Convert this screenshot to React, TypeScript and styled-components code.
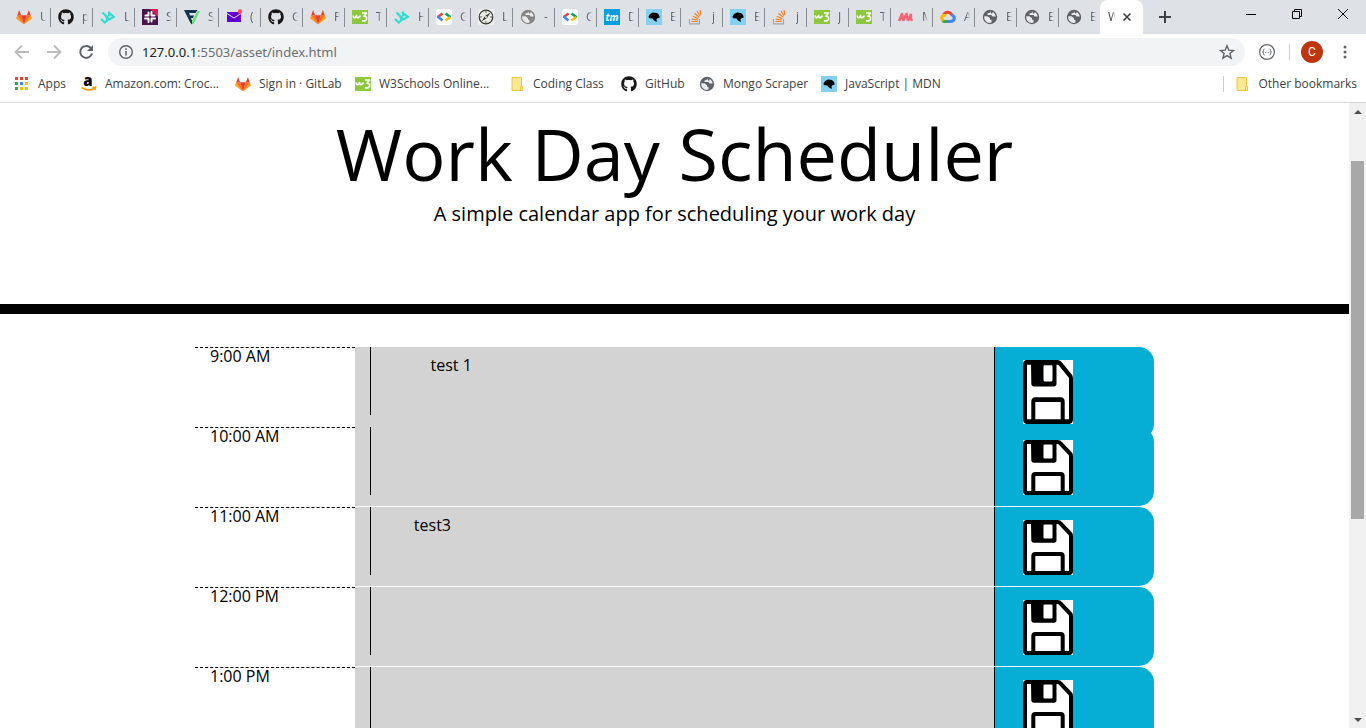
import React, { useState } from "react";
import styled, { createGlobalStyle } from "styled-components";
import { FaGithub } from "react-icons/fa";

const GlobalStyle = createGlobalStyle`
  * { box-sizing: border-box; }
  body {
    margin: 0;
    background: #fff;
    color: #000;
    font-family: "Open Sans", sans-serif;
    font-size: 16px;
    line-height: 24px;
  }
  button, textarea, input { font: inherit; color: inherit; }
`;

const Screen = styled.div`
  display: flex;
  flex-direction: column;
  height: 100vh;
  overflow: hidden;
`;

const PlainButton = styled.button`
  display: flex;
  align-items: center;
  justify-content: center;
  flex: none;
  padding: 0;
  border: 0;
  background: none;
`;

/* ---------- tab strip ---------- */

const TabStrip = styled.div`
  display: flex;
  height: 34px;
  padding-left: 8px;
  background: #dee1e6;
  font-size: 12px;
  line-height: 16px;
`;

const Tab = styled(PlainButton)`
  justify-content: flex-start;
  gap: 8px;
  width: 42px;
  padding-left: 8px;
  color: #5f6368;

  & + & {
    background: linear-gradient(#888c91, #888c91) left 0 top 8px / 1px 19px no-repeat;
  }
`;

const TabTitle = styled.span<{ $wide?: boolean }>`
  width: ${(p) => (p.$wide ? 8 : 6)}px;
  overflow: hidden;
  text-align: left;
  white-space: nowrap;
  mask-image: linear-gradient(to right, #000 40%, transparent);
`;

const ActiveTab = styled.div`
  display: flex;
  align-items: center;
  gap: 6px;
  width: 43px;
  padding-left: 8px;
  border-radius: 8px 8px 0 0;
  background: #fff;
  color: #3c4043;
`;

const NewTab = styled(PlainButton)`
  width: 44px;
`;

const WindowControls = styled.div`
  display: flex;
  margin-left: auto;
`;

const WindowButton = styled(PlainButton)`
  width: 46px;
  height: 28px;
`;

/* ---------- toolbar ---------- */

const Toolbar = styled.div`
  display: flex;
  align-items: center;
  height: 36px;
  padding: 0 9px 0 6px;
`;

const ToolButton = styled(PlainButton)`
  width: 32px;
  height: 28px;
`;

const AddressBar = styled.div`
  display: flex;
  flex: 1;
  align-items: center;
  height: 28px;
  margin-left: 6px;
  padding: 0 10px;
  border-radius: 14px;
  background: #f1f3f4;
  color: #6b6f73;
  font-family: "Noto Sans", sans-serif;
  font-size: 13px;
  line-height: 20px;
`;

const Address = styled.div`
  flex: 1;
  margin-left: 8px;
  b { color: #202124; font-weight: 400; }
`;

const Divider = styled.span`
  width: 1px;
  height: 16px;
  background: #cccfd2;
`;

const Avatar = styled(PlainButton)`
  width: 22px;
  height: 22px;
  margin: 0 10px 0 11px;
  border-radius: 50%;
  background: #bf360c;
  color: #fff;
  font-family: Roboto, sans-serif;
  font-size: 12px;
`;

/* ---------- bookmarks ---------- */

const BookmarkBar = styled.nav`
  display: flex;
  align-items: center;
  height: 33px;
  padding: 0 9px 4px 14px;
  border-bottom: 1px solid #d5d7da;
  color: #3c4043;
  font-size: 12px;
  line-height: 16px;
`;

const Bookmark = styled.a<{ $width?: number }>`
  display: flex;
  align-items: center;
  gap: 8px;
  width: ${(p) => (p.$width ? `${p.$width}px` : "auto")};
  color: inherit;
  text-decoration: none;
  white-space: nowrap;
`;

const OtherBookmarks = styled.div`
  display: flex;
  align-items: center;
  gap: 10px;
  margin-left: auto;
`;

/* ---------- page ---------- */

const Viewport = styled.div`
  display: flex;
  flex: 1;
  min-height: 0;
`;

const Page = styled.main`
  flex: 1;
  overflow: hidden;
`;

const Jumbotron = styled.header`
  padding: 7px 16px 75px;
  border-bottom: 10px solid #000;
  text-align: center;
`;

const Title = styled.h1`
  margin: 0;
  font-size: 72px;
  font-weight: 400;
  line-height: 86px;
`;

const Lead = styled.p`
  margin: 0;
  padding-top: 3px;
  font-size: 20px;
  line-height: 30px;
`;

const Planner = styled.div`
  max-width: 959px;
  margin: 33px auto 0;
`;

const TimeBlock = styled.section`
  display: grid;
  grid-template-columns: 2fr 8fr 2fr;
  height: 80px;
  padding-bottom: 1px;
`;

const Hour = styled.label`
  padding: 0 15px;
  border-top: 1px dashed #000;
  line-height: 16px;
`;

const Description = styled.div<{ $tall: boolean }>`
  height: ${(p) => (p.$tall ? 92 : 79)}px;
  padding-left: 15px;
  background: #d3d3d3;
`;

const Note = styled.textarea`
  display: block;
  width: 100%;
  height: 68px;
  padding: 6px 15px 6px 43px;
  border: 0;
  border-left: 1px solid #000;
  outline: 0;
  background: transparent;
  resize: none;
  overflow: hidden;
`;

const SaveButton = styled.button<{ $tall: boolean }>`
  display: flex;
  align-items: flex-start;
  height: ${(p) => (p.$tall ? 92 : 79)}px;
  padding: 13px 28px;
  border: 0;
  border-left: 1px solid #000;
  border-radius: 0 15px 15px 0;
  background: #06aed5;
`;

/* ---------- scrollbar ---------- */

const Scrollbar = styled.div`
  display: flex;
  flex-direction: column;
  align-items: center;
  width: 17px;
  background: #f1f1f1;
`;

const ScrollArrow = styled(PlainButton)`
  width: 17px;
  height: 17px;
`;

const Track = styled.div`
  flex: 1;
  width: 13px;
  padding-top: 41px;
`;

const Thumb = styled.div`
  height: 65%;
  background: #a8a8a8;
`;

/* ---------- icons ---------- */

const IconSvg = styled.svg`
  flex: none;
  fill: none;
`;

const Svg = ({ children, size = 16, box = 16 }: { children: React.ReactNode; size?: number; box?: number }) => (
  <IconSvg width={size} height={size} viewBox={`0 0 ${box} ${box}`} aria-hidden="true">
    {children}
  </IconSvg>
);

const OctoIcon = styled(FaGithub)`
  flex: none;
  width: 16px;
  height: 16px;
  color: #191717;
`;

const GitLab = () => (
  <Svg>
    <path d="M8 15.2 0.4 9.6 1.3 6.3 5.2 6.3Z" fill="#fc6d26" />
    <path d="M8 15.2 15.6 9.6 14.7 6.3 10.8 6.3Z" fill="#fc6d26" />
    <path d="M8 15.2 5.1 6.3H10.9Z" fill="#e24329" />
    <path d="M1.3 6.3 0.2 9.4 8 15.2Z" fill="#fca326" />
    <path d="M14.7 6.3 15.8 9.4 8 15.2Z" fill="#fca326" />
    <path d="M1.3 6.3 3.1 1 5.1 6.3ZM14.7 6.3 12.9 1 10.9 6.3Z" fill="#e24329" />
  </Svg>
);
const GitHub = () => <OctoIcon />;
const Teal = () => (
  <Svg>
    <g stroke="#35dbd0" strokeWidth="2.2">
      <path d="M2.500 3.500 7 8V11" />
      <path d="M9 2.500V7.500M8.500 3.500 13.800 7.800 9.500 10.500 6 7.500" />
      <path d="M1 10 4.800 13.500 8.800 10 6 7" />
    </g>
  </Svg>
);
const Slack = () => (
  <Svg>
    <path d="M0 0h16v16H0z" fill="#4a154b" />
    <path d="M8 0h8v8z" fill="#e01e5a" />
    <g stroke="#fff" strokeWidth="2" strokeLinecap="round">
      <path d="M6.500 3.500v3M3.500 6.500h3M9.500 3v3.500M9.500 6.500h3M3 9.500h3.500M6.500 9.500v3.500M9.500 9.500h3.500M9.500 9.500v3" />
    </g>
  </Svg>
);
const Shield = () => (
  <Svg>
    <path d="M0 1h13.500l-2 3H5l1 2.500h4L9 9H7l1.500 4L8 15.500 6.500 14Z" fill="#14304a" />
    <path d="M15.800 2 9.500 15H8V12L13.500 2Z" fill="#62e07d" />
  </Svg>
);
const Mail = () => (
  <Svg>
    <path d="M1 3h14v10H1z" fill="#5f01d1" />
    <path d="M1 4 8 8.500 15 4V5L8 9.500 1 5Z" fill="#f3ecff" />
    <circle cx="14" cy="2.500" r="2.200" fill="#ff4d52" />
  </Svg>
);
const W3 = () => (
  <Svg>
    <path d="M0 1h16v14H0z" fill="#8dc63f" />
    <path d="M1 6.500Q1.500 9.500 3 8.500T4.500 6.500Q5 9.500 6.500 8.500T8.500 6.500M10 4H14.500L12 7.300Q15.300 7.300 14.500 10.500 13 12.800 10 11.500" stroke="#fff" strokeWidth="1.600" strokeLinejoin="round" />
  </Svg>
);
const Developers = () => (
  <Svg>
    <rect width="16" height="16" rx="3" fill="#fff" />
    <g strokeWidth="2.600">
      <path d="M6.500 4.500 1.800 8" stroke="#ea4335" />
      <path d="M1.500 7.500 6.500 11.500" stroke="#4285f4" />
      <path d="M9.500 4.500 14.500 8.300" stroke="#0f9d58" />
      <path d="M14.300 8 9.500 11.500" stroke="#fbbc04" />
    </g>
  </Svg>
);
const Compass = () => (
  <Svg>
    <path d="M0 0h16v16H0z" fill="#eeeee9" />
    <circle cx="8" cy="8" r="6.800" stroke="#333" strokeWidth="1.200" />
    <path d="M8 2v2M8 12v2M2 8h2M12 8h2" stroke="#555" />
    <path d="M12.500 3.500 9 9 3.500 12.500 7 7Z" fill="#333" />
    <circle cx="8" cy="8" r="1" fill="#fff" />
  </Svg>
);
const Globe = ({ color = "#5f6368" }: { color?: string }) => (
  <Svg>
    <circle cx="8" cy="8" r="7.200" fill={color} />
    <path d="M2.200 7.300H5.500L8 9.200V10.800H9.500V13.600Q6 14.600 3.600 12Q1.800 10 2.200 7.300ZM8.200 2.200 7.800 3.800 5.500 4.500V6H9.500L10.500 7.500H13.800Q13.300 4.500 11 3L10 4.500H9Z" fill="#e8eaed" />
  </Svg>
);
const Tm = () => (
  <Svg>
    <path d="M0 0h16v16H0z" fill="#069de0" />
    <text x="8" y="12" fill="#fff" fontFamily="Open Sans, sans-serif" fontSize="10" fontStyle="italic" fontWeight="700" textAnchor="middle">tm</text>
  </Svg>
);
const Mdn = () => (
  <Svg>
    <path d="M0 0h16v16H0z" fill="#83d0f2" />
    <path d="M2.300 8 4 5 7 3.500 11 4 13 6 13.800 8.500 11.500 9.300 10.500 10 10.800 13 8 11.500 6.500 9.500 3.500 9.300Z" fill="#000" />
  </Svg>
);
const Stack = () => (
  <Svg>
    <path d="M1.500 10v4.800h10V10" stroke="#a5a7aa" strokeWidth="1.200" />
    <path d="M3.500 12.500h6M3.800 10.100l6 .9M4.800 7.300l5.500 2.400M6.500 4.300l4.500 4M9 2l3 5M12 1l.800 5" stroke="#f48024" strokeWidth="1.200" />
  </Svg>
);
const Marks = () => (
  <Svg>
    <path d="M1 12 4 5l1.500 6L8.500 5 10 11.500" stroke="#fb6374" strokeWidth="2.600" strokeLinejoin="round" />
    <path d="M10 12 13 5v5.500l1.500 1" stroke="#fb6374" strokeWidth="2.300" />
  </Svg>
);
const Cloud = () => (
  <Svg>
    <g strokeWidth="3">
      <path d="M3.500 6Q5 3 8 3.200 10.500 3.400 12 6" stroke="#ea4335" />
      <path d="M11.300 5.500Q14.600 7 14.300 10 13.500 12.500 10 12.500H8" stroke="#4285f4" />
      <path d="M8 12.500H4L2.500 11.500" stroke="#34a853" />
      <path d="M3 12Q.800 9.500 2.300 7 4 5.500 6 7" stroke="#fbbc04" />
    </g>
  </Svg>
);
const Apps = () => (
  <Svg>
    {["#ea4335", "#ea4335", "#ea4335", "#34a853", "#4285f4", "#fbbc04", "#34a853", "#fbbc04", "#fbbc04"].map((c, i) => (
      <rect key={i} x={1 + (i % 3) * 5} y={1 + Math.floor(i / 3) * 5} width="3" height="3" fill={c} />
    ))}
  </Svg>
);
const Amazon = () => (
  <Svg>
    <text x="7" y="10" fill="#000" fontFamily="Open Sans, sans-serif" fontSize="15" fontWeight="800" textAnchor="middle">a</text>
    <path d="M.500 11.500Q7.500 16 13 12.500M11.500 11.500l3-.3-.5 3" stroke="#f90" strokeWidth="1.500" />
  </Svg>
);
const Folder = () => (
  <Svg>
    <path d="M3 1.500H12.500V10.500H13.500V14.500H3Z" fill="#ffe793" stroke="#eac645" />
    <path d="M11.500 14V10.500h1" stroke="#eac645" />
  </Svg>
);
const Disk = ({ height }: { height: number }) => (
  <svg width="50" height={height} viewBox="0 0 50 55" preserveAspectRatio="none" aria-hidden="true">
    <path d="M0 0h50v55H0z" fill="#fff" />
    <path d="M2 4Q2 2 4 2H34.500Q36.500 2 37.500 3.500L47.500 14Q48 15 48 16.500V51Q48 53 46 53H4Q2 53 2 51Z" fill="#fff" stroke="#000" strokeWidth="4" />
    <path fillRule="evenodd" d="M8 3H33.500V20Q33.500 22.700 31 22.700H11Q8.300 22.700 8.300 20ZM21.500 4.500Q20.500 4.500 20.500 5.500V17.500Q20.500 18.500 21.500 18.500H28.500Q29.500 18.500 29.500 17.500V5.500Q29.500 4.500 28.500 4.500Z" fill="#000" />
    <path d="M10.300 52V36Q10.300 34 12.300 34H37.700Q39.700 34 39.700 36V52" stroke="#000" strokeWidth="4" fill="none" />
  </svg>
);

/* ---------- data ---------- */

const tabs: { icon: React.ReactNode; title: string }[] = [
  { icon: <GitLab />, title: "U" },
  { icon: <GitHub />, title: "p" },
  { icon: <Teal />, title: "L" },
  { icon: <Slack />, title: "S" },
  { icon: <Shield />, title: "S" },
  { icon: <Mail />, title: "(" },
  { icon: <GitHub />, title: "G" },
  { icon: <GitLab />, title: "P" },
  { icon: <W3 />, title: "T" },
  { icon: <Teal />, title: "H" },
  { icon: <Developers />, title: "G" },
  { icon: <Compass />, title: "L" },
  { icon: <Globe color="#858585" />, title: "-" },
  { icon: <Developers />, title: "G" },
  { icon: <Tm />, title: "D" },
  { icon: <Mdn />, title: "E" },
  { icon: <Stack />, title: "j" },
  { icon: <Mdn />, title: "E" },
  { icon: <Stack />, title: "j" },
  { icon: <W3 />, title: "J" },
  { icon: <W3 />, title: "T" },
  { icon: <Marks />, title: "M" },
  { icon: <Cloud />, title: "A" },
  { icon: <Globe />, title: "E" },
  { icon: <Globe />, title: "E" },
  { icon: <Globe />, title: "E" },
];

const bookmarks = [
  { icon: <Apps />, label: "Apps", width: 67 },
  { icon: <Amazon />, label: "Amazon.com: Croc...", width: 154 },
  { icon: <GitLab />, label: "Sign in · GitLab", width: 120 },
  { icon: <W3 />, label: "W3Schools Online...", width: 154 },
  { icon: <Folder />, label: "Coding Class", width: 112 },
  { icon: <GitHub />, label: "GitHub", width: 78 },
  { icon: <Globe />, label: "Mongo Scraper", width: 122 },
  { icon: <Mdn />, label: "JavaScript | MDN", width: 120 },
];

const hours = [
  { time: "9:00 AM", note: "    test 1", tall: true },
  { time: "10:00 AM", note: "", tall: false },
  { time: "11:00 AM", note: "test3", tall: false },
  { time: "12:00 PM", note: "", tall: false },
  { time: "1:00 PM", note: "", tall: false },
];

const Block = ({ time, note, tall }: { time: string; note: string; tall: boolean }) => {
  const [text, setText] = useState(note);
  const id = `note-${time.replace(/\W/g, "-")}`;
  return (
    <TimeBlock>
      <Hour htmlFor={id}>{time}</Hour>
      <Description $tall={tall}>
        <Note id={id} value={text} spellCheck={false} onChange={(e) => setText(e.target.value)} />
      </Description>
      <SaveButton $tall={tall} aria-label={`Save ${time}`}>
        <Disk height={tall ? 64 : 55} />
      </SaveButton>
    </TimeBlock>
  );
};

export default function App() {
  return (
    <Screen>
      <GlobalStyle />
      <TabStrip>
        {tabs.map((tab, i) => (
          <Tab key={i}>
            {tab.icon}
            <TabTitle>{tab.title}</TabTitle>
          </Tab>
        ))}
        <ActiveTab>
          <TabTitle $wide>W</TabTitle>
          <PlainButton aria-label="Close tab">
            <Svg size={10} box={10}><path d="M1.500 1.500l7 7M8.500 1.500l-7 7" stroke="#3c4043" strokeWidth="1.600" /></Svg>
          </PlainButton>
        </ActiveTab>
        <NewTab aria-label="New tab">
          <Svg size={12} box={12}><path d="M6 0v12M0 6h12" stroke="#3c4043" strokeWidth="2" /></Svg>
        </NewTab>
        <WindowControls>
          <WindowButton aria-label="Minimize">
            <Svg size={10} box={10}><path d="M0 5.500h10" stroke="#000" /></Svg>
          </WindowButton>
          <WindowButton aria-label="Restore">
            <Svg size={10} box={10}><path d="M.500 2.500h7v7h-7zM2.500 2.500v-2h7v7h-2" stroke="#000" /></Svg>
          </WindowButton>
          <WindowButton aria-label="Close">
            <Svg size={10} box={10}><path d="M0 0l10 10M10 0L0 10" stroke="#000" /></Svg>
          </WindowButton>
        </WindowControls>
      </TabStrip>

      <Toolbar>
        <ToolButton aria-label="Back">
          <Svg><path d="M15 8H2M8 1.500 1.500 8 8 14.500" stroke="#babcbe" strokeWidth="1.800" /></Svg>
        </ToolButton>
        <ToolButton aria-label="Forward">
          <Svg><path d="M1 8h13M8 1.500 14.500 8 8 14.500" stroke="#babcbe" strokeWidth="1.800" /></Svg>
        </ToolButton>
        <ToolButton aria-label="Reload">
          <Svg>
            <path d="M12.800 4A6 6 0 1 0 14 9.500" stroke="#5f6368" strokeWidth="2" />
            <path d="M15 1v6H9Z" fill="#5f6368" />
          </Svg>
        </ToolButton>
        <AddressBar>
          <Svg>
            <circle cx="8" cy="8" r="6.300" stroke="#5f6368" strokeWidth="1.400" />
            <path d="M8 7v4.500M8 4.300v1.600" stroke="#5f6368" strokeWidth="1.500" />
          </Svg>
          <Address><b>127.0.0.1</b>:5503/asset/index.html</Address>
          <PlainButton aria-label="Bookmark this tab">
            <Svg><path d="M8 1.800 9.800 6.200 14.500 6.500 10.900 9.500 12.100 14.200 8 11.600 3.900 14.200 5.100 9.500 1.500 6.500 6.200 6.200Z" stroke="#5f6368" strokeWidth="1.400" /></Svg>
          </PlainButton>
        </AddressBar>
        <PlainButton aria-label="Extension">
          <svg width="44" height="16" viewBox="-14 0 44 16" fill="none">
            <circle cx="8" cy="8" r="7.400" stroke="#5f6368" strokeWidth="1.200" />
            <path d="M5.500 5Q4.500 5 4.500 6.500T3.500 8Q4.500 8 4.500 9.500T5.500 11M10.500 5Q11.500 5 11.500 6.500T12.500 8Q11.500 8 11.500 9.500T10.500 11M6.300 8.500h.9M8.800 8.500h.9" stroke="#5f6368" />
          </svg>
        </PlainButton>
        <Divider />
        <Avatar aria-label="Profile">C</Avatar>
        <PlainButton aria-label="Menu">
          <svg width="24" height="16" viewBox="-4 0 24 16" fill="#5f6368">
            <circle cx="8" cy="3" r="1.500" /><circle cx="8" cy="8" r="1.500" /><circle cx="8" cy="13" r="1.500" />
          </svg>
        </PlainButton>
      </Toolbar>

      <BookmarkBar>
        {bookmarks.map((b) => (
          <Bookmark key={b.label} href="#" $width={b.width}>{b.icon}{b.label}</Bookmark>
        ))}
        <OtherBookmarks>
          <Divider />
          <Bookmark href="#"><Folder />Other bookmarks</Bookmark>
        </OtherBookmarks>
      </BookmarkBar>

      <Viewport>
        <Page>
          <Jumbotron>
            <Title>Work Day Scheduler</Title>
            <Lead>A simple calendar app for scheduling your work day</Lead>
          </Jumbotron>
          <Planner>
            {hours.map((h) => <Block key={h.time} {...h} />)}
          </Planner>
        </Page>
        <Scrollbar>
          <ScrollArrow aria-label="Scroll up">
            <Svg size={8} box={8}><path d="M0 6h8L4 2Z" fill="#505050" /></Svg>
          </ScrollArrow>
          <Track><Thumb /></Track>
          <ScrollArrow aria-label="Scroll down">
            <Svg size={8} box={8}><path d="M0 2h8L4 6Z" fill="#505050" /></Svg>
          </ScrollArrow>
        </Scrollbar>
      </Viewport>
    </Screen>
  );
}
